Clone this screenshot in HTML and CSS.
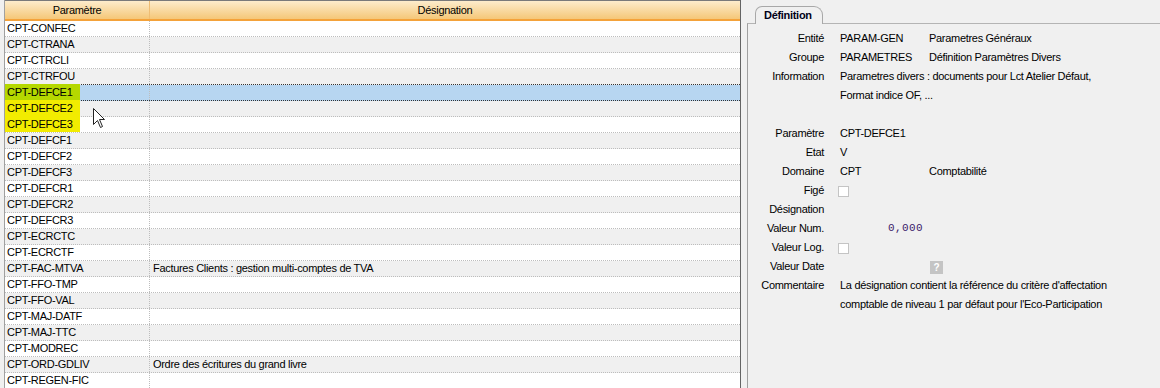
FILE: index.html
```html
<!DOCTYPE html>
<html lang="fr">
<head>
    <meta charset="UTF-8">
    <title>Paramètres</title>
    <link rel="stylesheet" href="styles.css">
</head>
<body>
    <div class="app">
        <div class="grid-pane">
            <div class="hdr"><span>Paramètre</span><span>Désignation</span></div>
            <div class="rows">
                <div class="row"><span>CPT-CONFEC</span><span></span></div>
                <div class="row"><span>CPT-CTRANA</span><span></span></div>
                <div class="row"><span>CPT-CTRCLI</span><span></span></div>
                <div class="row pre-sel"><span>CPT-CTRFOU</span><span></span></div>
                <div class="row sel"><span><span class="mark lime">CPT-DEFCE1</span></span><span></span></div>
                <div class="row"><span><span class="mark">CPT-DEFCE2</span></span><span></span></div>
                <div class="row"><span><span class="mark">CPT-DEFCE3</span></span><span></span></div>
                <div class="row"><span>CPT-DEFCF1</span><span></span></div>
                <div class="row"><span>CPT-DEFCF2</span><span></span></div>
                <div class="row"><span>CPT-DEFCF3</span><span></span></div>
                <div class="row"><span>CPT-DEFCR1</span><span></span></div>
                <div class="row"><span>CPT-DEFCR2</span><span></span></div>
                <div class="row"><span>CPT-DEFCR3</span><span></span></div>
                <div class="row"><span>CPT-ECRCTC</span><span></span></div>
                <div class="row"><span>CPT-ECRCTF</span><span></span></div>
                <div class="row"><span>CPT-FAC-MTVA</span><span>Factures Clients : gestion multi-comptes de TVA</span></div>
                <div class="row"><span>CPT-FFO-TMP</span><span></span></div>
                <div class="row"><span>CPT-FFO-VAL</span><span></span></div>
                <div class="row"><span>CPT-MAJ-DATF</span><span></span></div>
                <div class="row"><span>CPT-MAJ-TTC</span><span></span></div>
                <div class="row"><span>CPT-MODREC</span><span></span></div>
                <div class="row"><span>CPT-ORD-GDLIV</span><span>Ordre des écritures du grand livre</span></div>
                <div class="row"><span>CPT-REGEN-FIC</span><span></span></div>
            </div>
            <svg class="cursor" width="13" height="21" viewBox="0 0 13 21">
                <path d="M0.5 0.5 L0.5 16.5 L4.5 12.5 L7.5 19.5 L9.5 18.5 L6.5 11.5 L11.5 11.5 Z" fill="#fff" stroke="#222" stroke-width="1"/>
            </svg>
        </div>

        <div class="detail-pane">
            <div class="tabs"><div class="tab">Définition</div></div>
            <div class="tab-body">
                <span class="lbl">Entité</span><span>PARAM-GEN</span><span>Parametres Généraux</span>
                <span class="lbl">Groupe</span><span>PARAMETRES</span><span>Définition Paramètres Divers</span>
                <span class="lbl">Information</span><span class="wide">Parametres divers : documents pour Lct Atelier Défaut,<br>Format indice OF, ...</span>
                <span class="spacer"></span>
                <span class="lbl">Paramètre</span><span>CPT-DEFCE1</span><span></span>
                <span class="lbl">Etat</span><span>V</span><span></span>
                <span class="lbl">Domaine</span><span>CPT</span><span>Comptabilité</span>
                <span class="lbl">Figé</span><span><span class="chk"></span></span><span></span>
                <span class="lbl">Désignation</span><span></span><span></span>
                <span class="lbl">Valeur Num.</span><span class="num">0,000</span><span></span>
                <span class="lbl">Valeur Log.</span><span><span class="chk"></span></span><span></span>
                <span class="lbl">Valeur Date</span><span></span><span><span class="qbtn">?</span></span>
                <span class="lbl">Commentaire</span><span class="wide">La désignation contient la référence du critère d'affectation<br>comptable de niveau 1 par défaut pour l'Eco-Participation</span>
            </div>
        </div>
    </div>
</body>
</html>
```

FILE: styles.css
```css
body {
    margin: 0;
    height: 388px;
    overflow: hidden;
    background-color: #f0f0f0;
    color: #000;
    font-family: "Liberation Sans", Arial, sans-serif;
    font-size: 11px;
    letter-spacing: -0.3px;
}
.app {
    display: flex;
    height: 388px;
    padding-left: 4px;
}
.grid-pane {
    position: relative;
    width: 735px;
    flex: none;
    background-color: #fff;
    border-left: 1px solid #a0a0a0;
    border-right: 1px solid #646464;
    overflow: hidden;
}
.hdr {
    display: grid;
    grid-template-columns: 145px 1fr;
    height: 21px;
    box-sizing: border-box;
    border-top: 1px solid #7a7a7a;
    border-bottom: 2px solid #f4a23a;
    background: linear-gradient(#fdeccc, #f5c778);
}
.hdr span {
    text-align: center;
    line-height: 18px;
}
.hdr span:first-child {
    border-right: 1px solid #efbd74;
}
.row {
    display: grid;
    grid-template-columns: 145px 1fr;
    height: 16px;
    box-sizing: border-box;
    border-bottom: 1px dotted #bdbdbd;
    line-height: 15px;
    white-space: nowrap;
}
.row:nth-child(even) {
    background-color: #f0f0f0;
}
.row > span:first-child {
    border-right: 1px dotted #bdbdbd;
    padding-left: 2px;
}
.row > span + span {
    padding-left: 3px;
}
.row.pre-sel {
    border-bottom-color: #333;
}
.row.sel {
    background-color: #b7d6f1;
    border-bottom-color: #333;
}
.mark {
    background-color: #f2ec00;
    padding: 2px 8px 2px 5px;
    margin: 0 -8px 0 -5px;
}
.mark.lime {
    background-color: #b5d800;
}
.cursor {
    position: absolute;
    left: 88px;
    top: 108px;
}
.detail-pane {
    flex: 1;
    margin-left: 6px;
    display: flex;
    flex-direction: column;
}
.tabs {
    height: 23px;
    display: flex;
    align-items: flex-end;
    padding-left: 8px;
}
.tab {
    position: relative;
    top: 1px;
    height: 18px;
    box-sizing: border-box;
    padding: 0 10px 0 8px;
    border: 1px solid #a8a8a8;
    border-bottom: none;
    border-radius: 7px 9px 0 0;
    background-color: #f0f0f0;
    font-weight: bold;
    color: #000018;
    line-height: 17px;
}
.tab-body {
    flex: 1;
    border-top: 1px solid #b4b4b4;
    border-left: 1px solid #a0a0a0;
    padding-top: 5px;
    display: grid;
    grid-template-columns: 92px 89px 1fr;
    grid-auto-rows: 19px;
    align-content: start;
    line-height: 19px;
    white-space: nowrap;
}
.lbl {
    text-align: right;
    padding-right: 16px;
}
.wide {
    grid-column: 2 / 4;
    grid-row: span 2;
}
.spacer {
    grid-column: 1 / -1;
}
.chk {
    display: inline-block;
    width: 9px;
    height: 9px;
    margin-left: -2px;
    border: 1px solid #c4c4c4;
    background-color: #fff;
    vertical-align: middle;
}
.num {
    font-family: "Liberation Mono", monospace;
    font-size: 11px;
    letter-spacing: 0.4px;
    color: #3a1a6a;
    text-align: right;
    padding-right: 6px;
}
.qbtn {
    display: inline-block;
    width: 13px;
    height: 13px;
    margin-left: 1px;
    background-color: #c4c4c4;
    color: #fff;
    font-size: 10px;
    font-weight: bold;
    line-height: 13px;
    text-align: center;
    vertical-align: middle;
}
```
